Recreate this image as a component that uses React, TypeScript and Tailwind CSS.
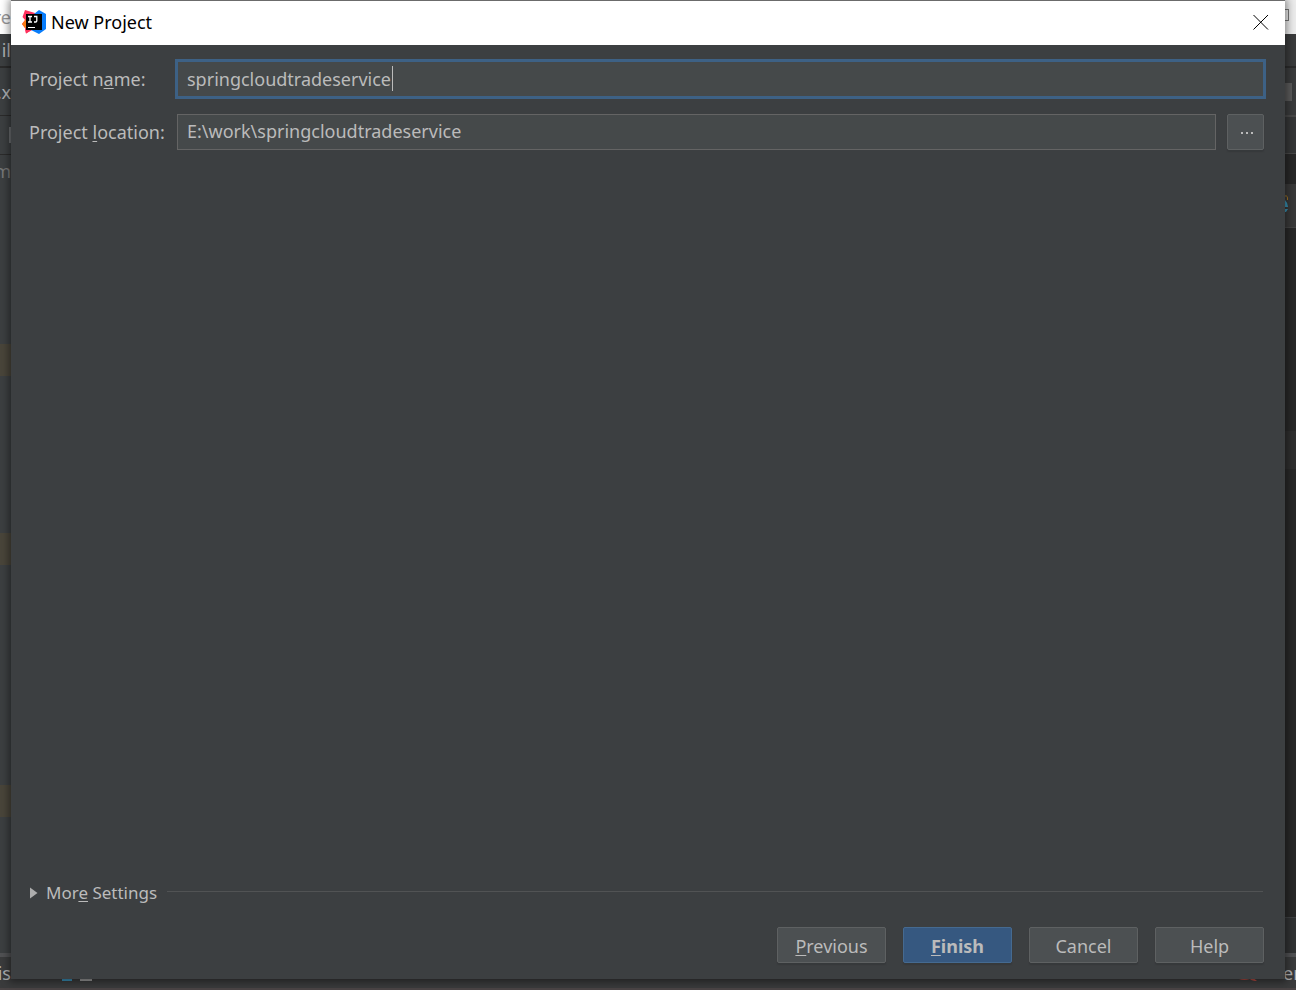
import type { ReactNode } from 'react';

function Mnemonic({ children }: { children: ReactNode }) {
  return <span className="underline decoration-1 underline-offset-2">{children}</span>;
}

function IdeaLogo() {
  return (
    <svg viewBox="0 0 24 24" className="size-6 shrink-0" aria-hidden="true">
      <path d="M3 0L13 3L10 20L4 23.5L3 18L0 14L3 10L0.5 7Z" fill="#fe315d" />
      <path d="M0 14L4 9L7 19L3 18Z" fill="#f97a12" />
      <path d="M12 4L17 0L24 4V19L17 24L9 20Z" fill="#087cfa" />
      <path d="M3 19L11 19L4 23.5Z" fill="#fe315d" />
      <rect x="4" y="4" width="16" height="16" fill="#000" />
      <path d="M6 6.5H10M8 6.5V12M6 12H10M12 6.5H14.8V10.8Q14.8 12 13.6 12H12" stroke="#fff" strokeWidth="1.3" fill="none" />
      <path d="M6 17.5H13" stroke="#fff" strokeWidth="1" />
    </svg>
  );
}

function LeftEdge() {
  return (
    <div className="flex w-[11px] flex-col overflow-hidden bg-[#3c3f41] text-[#afb1b3]">
      <div className="flex h-[34px] items-center justify-end bg-white text-[#999999]">re</div>
      <div className="flex h-[34px] items-center justify-end border-b-2 border-[#2b2b2b]">il</div>
      <div className="flex h-12 items-center justify-end border-b border-[#2b2b2b]">.x</div>
      <div className="flex h-[39px] items-center justify-end border-b border-[#2b2b2b]">
        <span className="h-4 w-0.5 bg-[#6b6e70]" />
      </div>
      <div className="flex h-[189px] items-start justify-end pt-1 text-[#777777]">m</div>
      <div className="h-8 bg-[#49453a]" />
      <div className="h-[157px]" />
      <div className="h-8 bg-[#49453a]" />
      <div className="h-[220px]" />
      <div className="h-8 bg-[#49453a]" />
      <div className="grow" />
    </div>
  );
}

function RightEdge() {
  return (
    <div className="flex w-[11px] flex-col overflow-hidden bg-[#282828] text-[#afb1b3]">
      <div className="flex h-[34px] items-start justify-end bg-[#ececec] pt-[9px] pr-[7px]">
        <span className="size-3 shrink-0 border border-[#777777]" />
      </div>
      <div className="h-[34px] border-b-2 border-[#2b2b2b] bg-[#3a3b3c]" />
      <div className="flex h-[49px] items-center border-b-2 border-[#484848] bg-[#3a3b3c]">
        <span className="h-[18px] w-[7px] bg-[#5a5a5a]" />
      </div>
      <div className="h-[37px] border-b border-[#484848] bg-[#353637]" />
      <div className="h-[30px]" />
      <div className="flex h-11 items-center border-b border-[#444444] bg-[#393939]">
        <svg viewBox="0 0 4 18" className="mb-1 h-[18px] w-1" aria-hidden="true">
          <path d="M0 1Q3 0 2.5 5" stroke="#a57725" fill="none" />
          <path d="M0 5Q3 8 3 12H0ZM0 14H3L1 17H0Z" fill="#3993b5" />
        </svg>
      </div>
      <div className="h-[203px]" />
      <div className="h-[38px] bg-[#2e2e2e]" />
      <div className="grow" />
      <div className="h-9 border-t border-[#3f4143] bg-[#303233]" />
    </div>
  );
}

function IdeWindow() {
  return (
    <div aria-hidden="true" className="absolute inset-0 flex flex-col overflow-hidden text-[18px] leading-6">
      <div className="flex grow justify-between">
        <LeftEdge />
        <RightEdge />
      </div>
      <div className="flex h-[37px] items-center justify-between overflow-hidden border-t-4 border-b-2 border-t-[#505153] border-b-[#4a4445] bg-[#3a3b3c] text-[#afb1b3]">
        <div className="flex items-end">
          <span className="flex w-[11px] justify-end">is</span>
          <span className="mb-1 ml-[51px] h-2 w-2.5 rounded-t-full bg-[#3a8fb7]" />
          <span className="mb-1 ml-2 h-0.5 w-3 bg-[#999999]" />
        </div>
        <div className="flex items-end gap-[26px]">
          <svg viewBox="0 0 18 8" className="mb-1 h-2 w-[18px]" aria-hidden="true">
            <path d="M0 6L4 2L9 6L12 3L18 8Q13 8 11 6Q5 8 0 6Z" fill="#b04a42" />
          </svg>
          <span className="w-[13px]">er</span>
        </div>
      </div>
    </div>
  );
}

const buttonBase = 'h-9 w-[109px] rounded-[2px] border pt-0.5 text-[18px] leading-6 shadow-[0_2px_1px_#36393b]';
const plainButton = 'border-[#5e6162] bg-[#4c5052] text-[#bbbbbb]';
const primaryButton = 'border-[#456a90] bg-[#365880] font-bold text-[#bbbbbb]';

function DialogButton({ primary, children }: { primary?: boolean; children: ReactNode }) {
  return (
    <button type="button" className={`${buttonBase} ${primary ? primaryButton : plainButton}`}>
      {children}
    </button>
  );
}

export default function App() {
  return (
    <div className="relative flex min-h-screen flex-col bg-[#3c3f41] px-[11px] pb-[11px] font-['Noto_Sans','Noto_Sans_CJK_SC',sans-serif]">
      <IdeWindow />
      <main
        role="dialog"
        aria-labelledby="dialog-title"
        className="relative flex grow flex-col border-t border-[#6b6b6b] bg-[#3c3f41] text-[18px] leading-6 text-[#bbbbbb] shadow-[0_1px_8px_2px_rgba(0,0,0,0.45)]"
      >
        <header className="flex h-11 items-center bg-white pr-4 pb-0.5 pl-[11px] text-black">
          <IdeaLogo />
          <h1 id="dialog-title" className="ml-[5px] grow">New Project</h1>
          <button type="button" aria-label="Close" className="flex size-4 items-center justify-center">
            <svg viewBox="0 0 16 16" className="size-4" aria-hidden="true">
              <path d="M0.5 1L15 15.5M15 1L0.5 15.5" stroke="#000" strokeWidth="1" />
            </svg>
          </button>
        </header>

        <form className="flex grow flex-col px-[18px] pt-4 pb-4">
          <div className="flex items-center">
            <label htmlFor="project-name" className="w-[148px] shrink-0">
              Project n<Mnemonic>a</Mnemonic>me:
            </label>
            <div className="relative mr-[3px] h-9 grow">
              <input
                id="project-name"
                type="text"
                defaultValue="springcloudtradeservice"
                className="h-9 w-full border border-[#4f5354] bg-[#45494a] px-[9px] outline-3 -outline-offset-1 outline-[#3d6185]"
              />
              <span className="absolute top-[5px] left-[215px] h-[25px] w-px bg-[#bbbbbb]" />
            </div>
          </div>
          <div className="mt-[17px] flex items-center">
            <label htmlFor="project-location" className="w-[148px] shrink-0">
              Project <Mnemonic>l</Mnemonic>ocation:
            </label>
            <input
              id="project-location"
              type="text"
              defaultValue="E:\work\springcloudtradeservice"
              className="h-9 min-w-0 grow border border-[#646464] bg-[#45494a] px-[9px] pb-0.5 outline-none"
            />
            <button
              type="button"
              aria-label="Browse"
              className="mr-[3px] ml-[11px] flex h-9 w-[37px] items-center justify-center gap-[3px] rounded-[2px] border border-[#5e6162] bg-[#4c5052] pt-0.5 pl-0.5 shadow-[0_2px_1px_#36393b]"
            >
              <span className="size-0.5 bg-[#bbbbbb]" />
              <span className="size-0.5 bg-[#bbbbbb]" />
              <span className="size-0.5 bg-[#bbbbbb]" />
            </button>
          </div>

          <div className="mt-auto flex items-center pr-1">
            <button type="button" className="flex items-center gap-2 text-[17px]">
              <svg viewBox="0 0 8 12" className="ml-px h-3 w-2" aria-hidden="true">
                <path d="M0 0.5L7.5 6L0 11.5Z" fill="#adadad" />
              </svg>
              <span>
                Mor<Mnemonic>e</Mnemonic> Settings
              </span>
            </button>
            <span className="mb-[3px] ml-2.5 h-px grow bg-[#515354]" />
          </div>

          <div className="mt-[22px] mr-[3px] flex justify-end gap-[17px]">
            <DialogButton>
              <Mnemonic>P</Mnemonic>revious
            </DialogButton>
            <DialogButton primary>
              <Mnemonic>F</Mnemonic>inish
            </DialogButton>
            <DialogButton>Cancel</DialogButton>
            <DialogButton>Help</DialogButton>
          </div>
        </form>
      </main>
    </div>
  );
}
